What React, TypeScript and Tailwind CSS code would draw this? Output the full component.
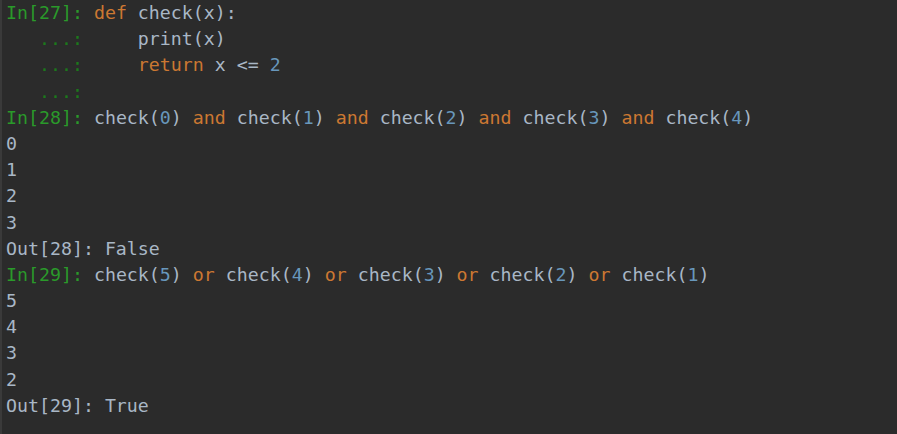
const kw = 'text-[#cc7832]';
const num = 'text-[#6897bb]';
const prompt = 'text-[#2a9a2a]';
const cont = 'text-[#1b7a1b]';

type Seg = [string, string?];

const lines: { prompt?: [string, string]; segs: Seg[] }[] = [
  { prompt: ['In[27]: ', prompt], segs: [['def', kw], [' check(x):']] },
  { prompt: ['   ...: ', cont], segs: [['    print(x)']] },
  { prompt: ['   ...: ', cont], segs: [['    '], ['return', kw], [' x <= '], ['2', num]] },
  { prompt: ['   ...: ', cont], segs: [] },
  {
    prompt: ['In[28]: ', prompt],
    segs: [
      ['check('], ['0', num], [') '], ['and', kw], [' check('], ['1', num], [') '], ['and', kw],
      [' check('], ['2', num], [') '], ['and', kw], [' check('], ['3', num], [') '], ['and', kw],
      [' check('], ['4', num], [')'],
    ],
  },
  { segs: [['0']] },
  { segs: [['1']] },
  { segs: [['2']] },
  { segs: [['3']] },
  { segs: [['Out[28]: False']] },
  {
    prompt: ['In[29]: ', prompt],
    segs: [
      ['check('], ['5', num], [') '], ['or', kw], [' check('], ['4', num], [') '], ['or', kw],
      [' check('], ['3', num], [') '], ['or', kw], [' check('], ['2', num], [') '], ['or', kw],
      [' check('], ['1', num], [')'],
    ],
  },
  { segs: [['5']] },
  { segs: [['4']] },
  { segs: [['3']] },
  { segs: [['2']] },
  { segs: [['Out[29]: True']] },
];

export default function App() {
  return (
    <div className="w-[897px] h-[434px] bg-[#2b2b2b] border-l-2 border-[#3a3a3a] overflow-hidden">
      <div className="pl-[4px] font-['DejaVu_Sans_Mono',monospace] text-[18.25px] leading-[26.2px] text-[#a9b7c6] whitespace-pre">
        {lines.map((l, i) => (
          <div key={i} className="h-[26.2px]">
            {l.prompt && <span className={l.prompt[1]}>{l.prompt[0]}</span>}
            {l.segs.map((s, j) => (
              <span key={j} className={s[1]}>{s[0]}</span>
            ))}
          </div>
        ))}
      </div>
    </div>
  );
}
